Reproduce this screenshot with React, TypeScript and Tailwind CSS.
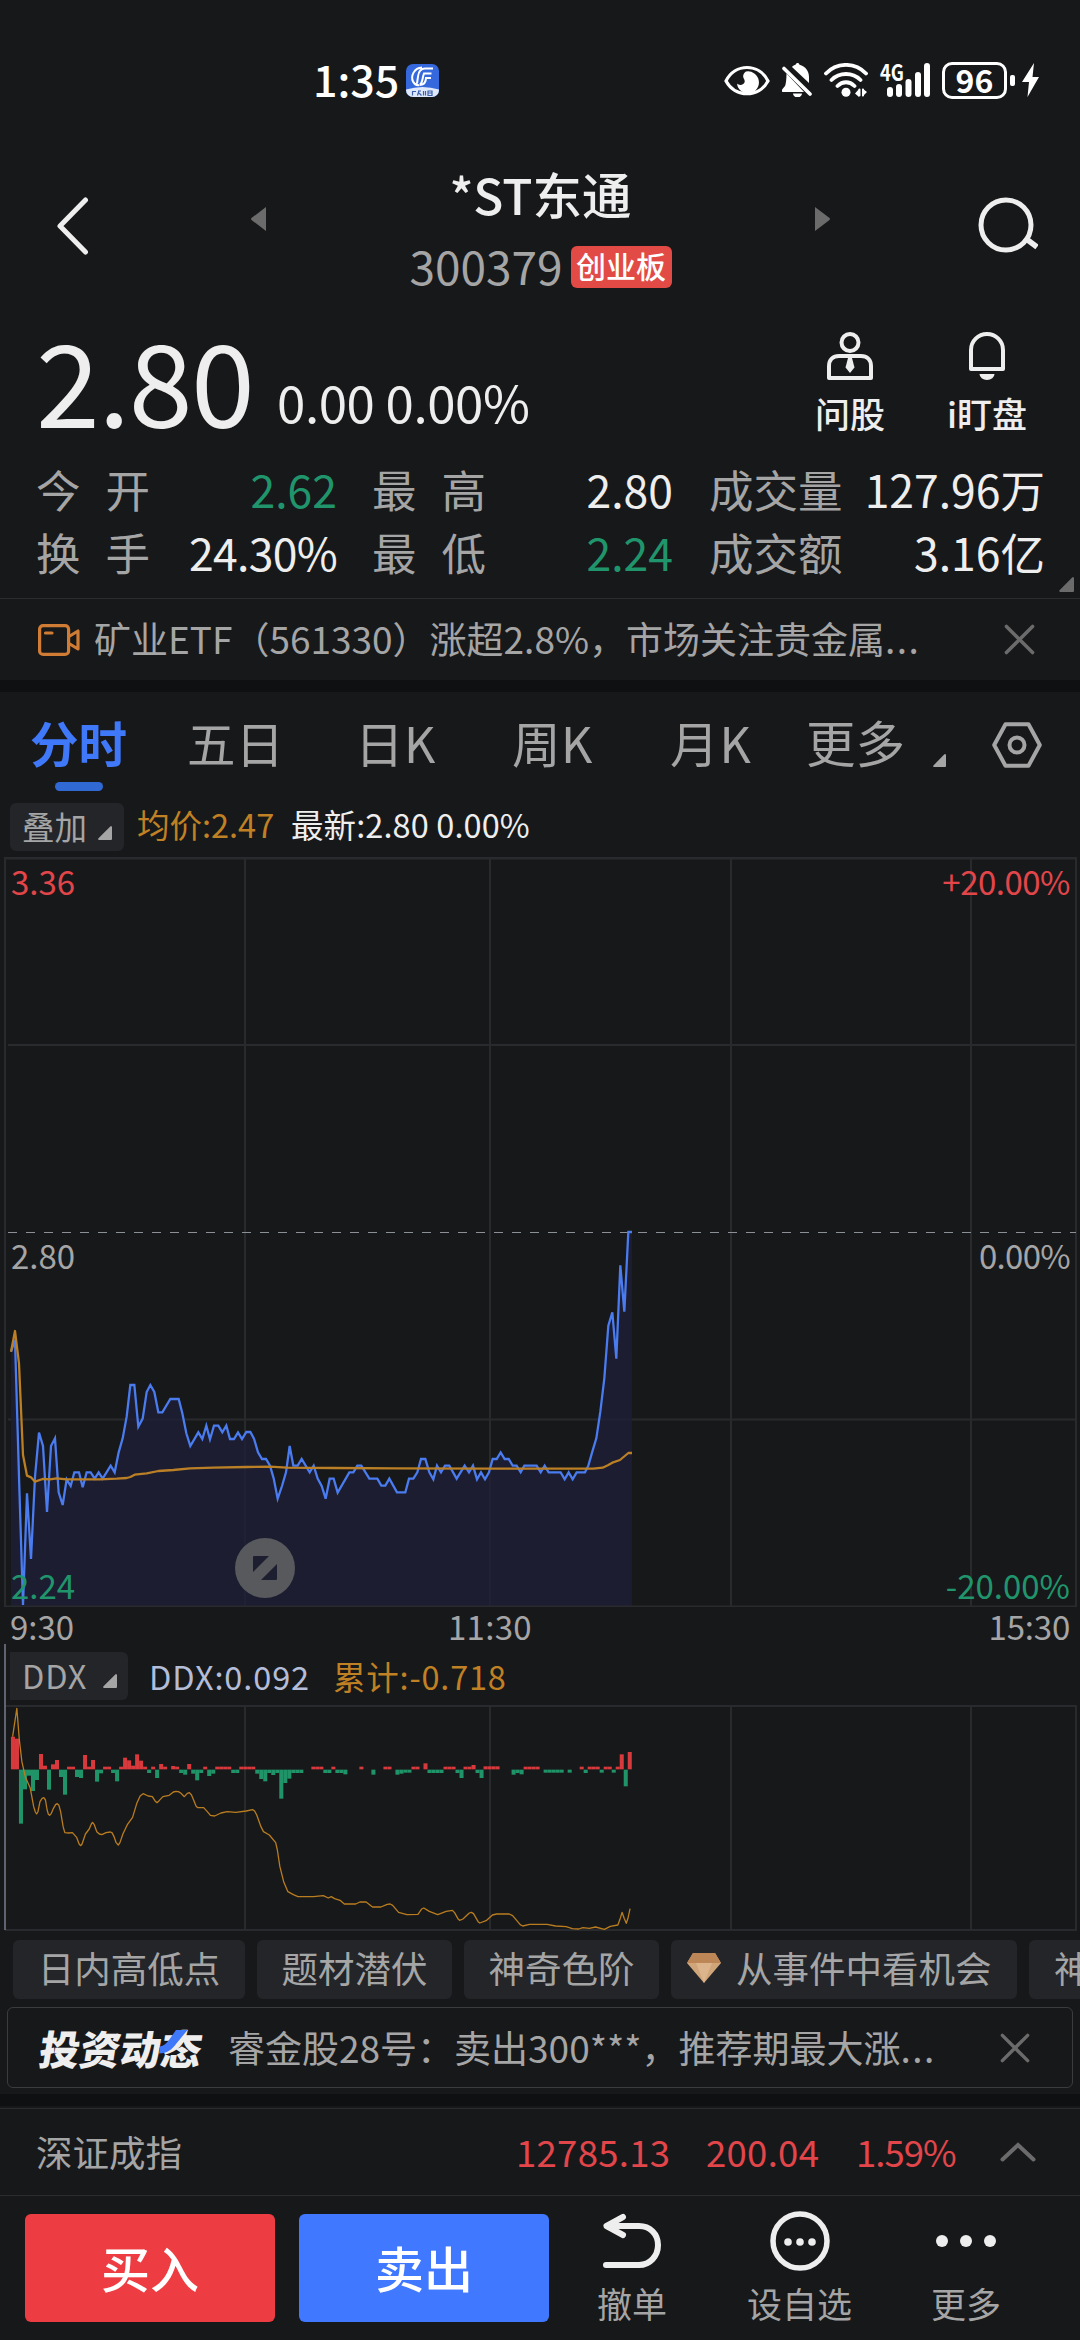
import { ReactNode } from "react";

// x, y pairs in thirds of a pixel, y counted from the 2.80 area (top = 1200)
const PRICE = "33,455 45,420 57,830 69,1215 81,880 93,1077 105,830 117,698 129,738 141,936 153,738 165,715 176,877 188,915 200,838 212,858 223,817 237,817 248,862 260,817 272,817 284,836 296,817 308,836 332,797 344,817 356,757 368,715 380,650 391,555 403,555 415,680 428,656 440,576 451,555 463,576 475,637 487,637 511,597 536,597 547,640 559,700 571,738 595,697 607,717 619,677 630,718 642,677 655,677 667,697 679,677 690,717 702,717 714,697 726,717 739,696 751,696 762,716 774,757 786,777 798,777 810,797 821,835 833,896 846,858 858,817 869,738 880,797 893,797 905,777 929,817 941,797 953,836 965,858 977,896 989,836 1001,836 1013,878 1048,817 1060,817 1072,797 1084,797 1108,836 1132,836 1144,857 1156,857 1168,836 1191,877 1216,877 1227,836 1240,836 1252,817 1263,777 1276,777 1288,817 1300,838 1311,797 1323,817 1335,797 1348,797 1370,836 1394,797 1407,817 1419,797 1431,838 1443,817 1455,838 1467,817 1478,777 1490,777 1502,757 1514,777 1526,777 1538,797 1550,797 1562,817 1573,797 1610,797 1622,817 1634,797 1646,817 1682,817 1694,838 1706,817 1718,838 1730,817 1755,817 1765,797 1777,755 1789,715 1801,635 1813,535 1825,377 1837,337 1849,476 1861,196 1873,335 1885,96 1896,96";

const AVERAGE = "33,455 45,393 57,490 69,765 81,827 93,832 105,845 128,837 150,838 170,835 200,838 300,838 350,836 380,834 391,831 404,824 440,820 475,813 520,810 570,805 640,803 740,801 810,800 860,803 1000,804 1190,805 1460,806 1780,806 1808,803 1825,795 1837,788 1860,780 1885,759 1896,759";

const DDX_LINE = "30,320 40,235 46,330 52,395 60,440 72,475 80,530 84,546 87,552 90,546 95,515 100,505 104,503 108,510 112,540 115,553 118,556 122,550 127,535 132,524 136,521 140,526 144,545 150,590 154,608 163,609 172,608 182,622 188,642 192,647 195,642 203,612 212,597 217,582 220,577 224,584 230,605 236,612 242,614 252,608 262,606 266,608 271,620 276,638 281,645 285,638 292,612 303,583 315,562 325,520 333,498 340,491 352,498 362,500 368,512 373,518 378,512 387,500 402,496 412,486 418,484 424,485 430,490 438,500 445,490 450,488 455,495 460,510 466,529 470,533 484,533 492,544 500,556 510,558 525,549 540,545 560,547 585,543 600,539 605,543 610,555 620,590 626,605 640,615 655,638 659,660 665,710 674,755 684,785 697,794 708,800 745,800 768,797 780,804 787,800 795,806 808,811 818,822 845,822 855,816 870,816 885,831 905,831 920,823 927,822 933,826 947,847 967,854 993,853 1002,837 1007,834 1020,844 1040,854 1060,844 1075,841 1080,848 1088,866 1092,871 1100,867 1115,849 1120,847 1125,851 1136,875 1140,879 1155,872 1170,855 1180,852 1210,852 1218,857 1236,884 1242,888 1258,883 1300,883 1320,888 1345,890 1360,896 1375,897 1385,893 1400,895 1415,891 1436,898 1450,889 1468,885 1473,868 1478,847 1483,865 1488,880 1492,865 1497,836";

const DDX_BARS = [
    98, 92, -162, -59, -18, -64, -31, 46, 11, -60, 15, 28, -22, -75, 8, 8, -22, -25, 43, 8, 28, -36, -11, 8, 8, -10, -35, 8, 35, 27,
    11, 45, 26, 8, -10, 8, -25, 16, 8, 0, 10, 8, -10, -15, 16, -12, -32, -10, 8, -19, -12, 8, 8, 8, 8, -10, -10, 8, 8, 8,
    8, -12, -28, -35, -10, -16, -10, -87, -40, -27, -10, -10, -10, 0, 0, 8, 8, 8, -10, -10, 8, -10, -10, -14, 0, 0, 0, 8, 0, 0,
    -15, 0, 0, 8, 8, 0, -15, -12, -9, -9, 8, 8, 0, 18, -10, -10, -10, -10, 8, 8, 8, -10, -25, 8, 8, 13, -10, -25, 9, 9,
    9, 9, 0, 0, 0, -15, -10, -14, 8, 8, 8, 8, 0, -9, -9, -9, -9, -9, 0, -9, 0, 0, 8, -10, 8, 8, 8, -9, 8, 8,
    -9, 8, 45, -50, 52,
];

const GRID_X = [245, 490, 731, 971];

const STATS = [
    [["今开", "2.62", "text-[#20956c]"], ["最高", "2.80", "text-[#eeeeee]"], ["成交量", "127.96万", "text-[#eeeeee]"]],
    [["换手", "24.30%", "text-[#eeeeee] tracking-[-0.700px]"], ["最低", "2.24", "text-[#20956c]"], ["成交额", "3.16亿", "text-[#eeeeee]"]],
];

const STAT_CELLS = ["w-[301px]", "w-[301px] ml-[35px]", "w-[336px] ml-[36px]"];

function Corner({ className }: { className: string }) {
    return (
        <svg viewBox="0 0 14 14" className={className}>
            <path d="M14 1v12a1 1 0 0 1-1 1H1.200a1 1 0 0 1-.7-1.700L12.300.4A1 1 0 0 1 14 1Z" fill="currentColor" />
        </svg>
    );
}

function Close({ className }: { className: string }) {
    return (
        <svg viewBox="0 0 32 32" className={className} fill="none" stroke="#6b6b6c" strokeWidth="3.600" strokeLinecap="round">
            <path d="M2.500 2.500l27 27M29.500 2.500l-27 27" />
        </svg>
    );
}

function StatusBar() {
    return (
        <div className="flex h-[160px] items-start pt-[62px] text-white">
            <span className="ml-[313px] mt-[-5px] w-[93px] text-[43px] leading-[43px] font-medium">1:35</span>
            <svg viewBox="0 0 33 33" className="mt-[2px] w-[33px] h-[33px]">
                <rect width="33" height="33" rx="7" fill="#3568dc" />
                <path d="M0 25.500q16.500-5 33 0V26a7 7 0 0 1-7 7H7a7 7 0 0 1-7-7Z" fill="#dfe9fb" />
                <path d="M16 3.500C8 4 4.500 12 7 17.500c1.500 3 4 4 6.500 3.500M27 4.500H19c-5 0-6.500 4-7 8l-1 7M25.500 9.500H18c-2 5-1 9-4 11M25 14h-5c0 4-2 6.500-6 7" fill="none" stroke="#fff" strokeWidth="2" />
                <path d="M6 27.500h4M6.500 27.500v4M12 27h3M13 26.500l-1.500 5M13 29l2.500 2.500M17.500 27v4.500M19.500 27v4.500M22 27h4v4.500h-4ZM22 29h4" fill="none" stroke="#3c5fae" strokeWidth="1.200" />
            </svg>
            <svg viewBox="0 0 46 32" className="ml-[285px] mt-[3px] w-[46px] h-[32px]">
                <path d="M2 16C11-2 35-2 44 16 35 33 11 33 2 16Z" fill="none" stroke="#fff" strokeWidth="3.200" />
                <path d="M22 6.500a11 11 0 1 1-9 12c1 1.500 6 2.500 7.500-1 1.200-3-2.500-4.500-1-8 .6-1.500 1.500-2.500 2.500-3Z" fill="#fff" />
            </svg>
            <svg viewBox="0 0 30 34" className="ml-[12px] mt-[1px] w-[30px] h-[34px]" fill="#fff">
                <path d="M10 4c1-1.500 2.500-2 3.500-2.300C14 .6 14.800 0 15.500 0c1 0 1.700.6 2 1.700C23.500 3.500 27 8 27 14v6Z" />
                <path d="M4.500 10.500L22 29H1.500c-2 0-2-1.500-1-3l2.500-3c1-1.500 1.500-8 1.500-12.500ZM11 30.500h9a4.500 4 0 0 1-9 0Z" />
                <path d="M2 5.500L28 31" stroke="#fff" strokeWidth="3.600" strokeLinecap="round" />
            </svg>
            <svg viewBox="0 0 44 34" className="ml-[12px] mt-[1px] w-[44px] h-[34px]" fill="none" stroke="#fff" strokeWidth="3.800" strokeLinecap="round">
                <path d="M2 10.500C13-1 31-1 42 10.500M7.500 17c8-8 21-8 29 0M13.500 23c5-5 12-5 17 0" />
                <circle cx="22" cy="29.300" r="4.500" fill="#fff" stroke="none" />
                <path d="M35 26v8l-4-3.500M38.500 33.500v-8l4.500 3.500" fill="#fff" stroke="none" />
                <path d="M35.500 26.500v6M39 26.500v6" strokeWidth="2" />
            </svg>
            <svg viewBox="0 0 50 34" className="ml-[12px] mt-[1px] w-[50px] h-[34px] overflow-visible" fill="#fff">
                <text x="0" y="17.500" fontSize="23" fontWeight="700" textLength="24" lengthAdjust="spacingAndGlyphs">4G</text>
                <rect x="7" y="24" width="6" height="10" rx="3" />
                <rect x="16" y="21" width="6" height="13" rx="3" />
                <rect x="25.500" y="16" width="6" height="18" rx="3" />
                <rect x="35" y="9" width="6" height="25" rx="3" />
                <rect x="44" y="0" width="6" height="34" rx="3" />
            </svg>
            <div className="ml-[12px] flex h-[37px] w-[65px] items-center justify-center rounded-[10px] border-[3px] border-white text-[32px] leading-none font-bold">
                <span className="mt-[-4px]">96</span>
            </div>
            <div className="ml-[3px] mt-[13px] h-[11px] w-[5px] rounded-[2px] bg-white" />
            <svg viewBox="0 0 17 34" className="ml-[7px] mt-[1px] w-[17px] h-[34px]">
                <path d="M12 0L0 19h7L5.500 34 17 14h-6.500Z" fill="#fff" />
            </svg>
        </div>
    );
}

function Header() {
    return (
        <div className="flex h-[150px] items-start">
            <svg viewBox="0 0 32 58" className="ml-[57px] mt-[37px] w-[32px] h-[58px]" fill="none" stroke="#eeeeee" strokeWidth="5" strokeLinecap="round" strokeLinejoin="round">
                <path d="M28.500 3L3 29l25.500 26" />
            </svg>
            <svg viewBox="0 0 15 24" className="ml-[162px] mt-[47px] w-[15px] h-[24px]">
                <path d="M15 0v24L.8 13.200a1.500 1.500 0 0 1 0-2.400Z" fill="#6b6b6c" />
            </svg>
            <div className="flex w-[549px] flex-col items-center">
                <div className="mt-[5px] text-[49.500px] leading-[58px] font-medium text-[#eeeeee]">*ST东通</div>
                <div className="mt-[20px] flex h-[48px] items-center text-[#a5a5a6]">
                    <span className="text-[46px] leading-none -mt-[5px]">300379</span>
                    <span className="ml-[8px] flex h-[42px] w-[101px] items-center justify-center rounded-[6px] bg-[#e14a45] text-[30px] leading-none font-medium text-white">
                        <span className="mt-[-4px]">创业板</span>
                    </span>
                </div>
            </div>
            <svg viewBox="0 0 15 24" className="mt-[47px] w-[15px] h-[24px]">
                <path d="M0 0v24l14.200-10.800a1.500 1.500 0 0 0 0-2.400Z" fill="#6b6b6c" />
            </svg>
            <svg viewBox="0 0 60 56" className="ml-[148px] mt-[37px] w-[60px] h-[56px]" fill="none" stroke="#eeeeee" strokeWidth="5">
                <circle cx="28" cy="28" r="25" />
                <path d="M47 41l12 9" strokeWidth="5.500" />
            </svg>
        </div>
    );
}

function Quote() {
    return (
        <div className="flex h-[140px] items-start text-[#eeeeee]">
            <span className="ml-[36px] mt-[11px] w-[241px] text-[115px] leading-[115px] tracking-[-1.500px]">2.80</span>
            <span className="mt-[61px] w-[538px] text-[51px] leading-[60px] tracking-[-0.400px]">0.00 0.00%</span>
            <div className="flex w-[70px] flex-col items-center">
                <svg viewBox="0 0 46 48" className="mt-[22px] w-[46px] h-[48px]" fill="none" stroke="#eeeeee" strokeWidth="4" strokeLinejoin="round">
                    <circle cx="23" cy="10.500" r="8.500" />
                    <path d="M2 46V34c0-6 4-10 10-10h22c6 0 10 4 10 10v12Z" />
                    <path d="M21 26h4l2.500 9.500L23 41l-4.500-5.500Z" fill="#eeeeee" stroke="none" />
                </svg>
                <span className="mt-[11px] text-[35px] leading-[44px] font-medium whitespace-nowrap">问股</span>
            </div>
            <div className="ml-[62px] flex w-[80px] flex-col items-center">
                <svg viewBox="0 0 36 48" className="mt-[22px] w-[36px] h-[48px]">
                    <path d="M2 37V18a16 16 0 0 1 32 0v19Z" fill="none" stroke="#eeeeee" strokeWidth="4" strokeLinejoin="round" />
                    <path d="M10.500 42h15a7.500 6 0 0 1-15 0Z" fill="#eeeeee" />
                </svg>
                <span className="mt-[11px] text-[35px] leading-[44px] font-medium whitespace-nowrap">i盯盘</span>
            </div>
        </div>
    );
}

function Stats() {
    return (
        <div className="relative flex h-[148px] flex-col pt-[8px]">
            {STATS.map((row, rowIdx) => (
                <div key={rowIdx} className="flex h-[63px] items-center pl-[36px] text-[44.500px] leading-none text-[#a5a5a6]">
                    {row.map(([label, value, color], idx) => (
                        <div key={label} className={`flex justify-between ${STAT_CELLS[idx]}`}>
                            <span className={label.length === 2 ? "tracking-[25px]" : ""}>{label}</span>
                            <span className={color}>{value}</span>
                        </div>
                    ))}
                </div>
            ))}
            <Corner className="absolute right-[6px] bottom-[6px] w-[15px] h-[15px] text-[#6b6b6c]" />
        </div>
    );
}

function News() {
    return (
        <div className="flex h-[82px] items-center border-t-[1px] border-[#2a2c2e] text-[37px] text-[#a5a5a6]">
            <svg viewBox="0 0 42 32" className="ml-[38px] w-[42px] h-[32px]" fill="none" stroke="#d07c34" strokeWidth="3.200" strokeLinejoin="round">
                <rect x="1.600" y="1.600" width="29" height="28.800" rx="3.500" />
                <path d="M31 12.500l9-5.500v18l-9-5.500M7.500 9h6.500" strokeLinecap="round" />
            </svg>
            <span className="ml-[14px] mt-[-3px] w-[910px] whitespace-nowrap leading-none">矿业ETF（561330）涨超2.8%，市场关注贵金属<span className="tracking-[1.500px]">...</span></span>
            <Close className="w-[31px] h-[31px]" />
        </div>
    );
}

function Tabs() {
    return (
        <div className="flex h-[108px] items-start text-[48.500px] leading-[60px] text-[#a5a5a6]">
            <div className="ml-[30px] mt-[20px] flex w-[157px] flex-col text-[#4078fa]">
                <span className="font-bold">分时</span>
                <span className="ml-[25px] mt-[10px] h-[9px] w-[48px] rounded-full bg-[#3068d4]" />
            </div>
            <span className="mt-[20px] w-[168px]">五日</span>
            <span className="mt-[20px] w-[157px] tracking-[0.500px]">日K</span>
            <span className="mt-[20px] w-[158px] tracking-[0.500px]">周K</span>
            <span className="mt-[20px] w-[136px] tracking-[1px]">月K</span>
            <span className="mt-[20px] w-[127px] text-[49.500px]">更多</span>
            <Corner className="mt-[62px] w-[13px] h-[13px]" />
            <svg viewBox="0 0 50 46" className="ml-[46px] mt-[30px] w-[50px] h-[46px]" fill="none" stroke="currentColor" strokeWidth="4" strokeLinejoin="round">
                <path d="M13.500 2.200h23L47.800 23 36.500 43.800h-23L2.200 23Z" />
                <circle cx="25" cy="23" r="7.500" />
            </svg>
        </div>
    );
}

function Chip({ children, className }: { children: ReactNode; className: string }) {
    return <div className={`flex shrink-0 items-center bg-[#242529] text-[#a5a5a6] ${className}`}>{children}</div>;
}

function PriceChart() {
    return (
        <>
            <div className="flex h-[57px] items-start pt-[3px] text-[32.500px] leading-[40px]">
                <Chip className="ml-[10px] h-[48px] w-[114px] rounded-[6px] pl-[12px]">
                    <span className="mt-[-2px]">叠加</span>
                    <Corner className="ml-[11px] mt-[12px] w-[14px] h-[14px]" />
                </Chip>
                <span className="ml-[13px] mt-[1px] w-[154px] text-[#c08124]">均价:2.47</span>
                <span className="mt-[1px] tracking-[0.100px] text-[#eeeeee]">最新:2.80 0.00%</span>
            </div>
            <div className="relative h-[750px] text-[33px] leading-[40px]">
                <svg viewBox="0 857 1080 750" className="block h-[750px] w-[1080px]">
                    <g stroke="#292a2d" strokeWidth="2">
                        <path d="M5 858H1077" strokeWidth="3" />
                        <path d="M5 857V1607M1076 857V1607" />
                        <path d="M8 1045H1076M8 1419.500H1076" />
                        {GRID_X.map((x) => <path key={x} d={`M${x} 858V1607`} />)}
                    </g>
                    <g transform="translate(0 1200) scale(0.33333)">
                        <polygon points={`33,1220 ${PRICE} 1896,1220`} fill="#1f1f3a" fillOpacity="0.75" />
                    </g>
                    <path d="M8 1232.500H1076" stroke="#8b9097" strokeWidth="1.200" strokeDasharray="9 9" />
                    <g transform="translate(0 1200) scale(0.33333)" fill="none" strokeWidth="6.800">
                        <polyline points={PRICE} stroke="#4a7cf0" />
                        <polyline points={AVERAGE} stroke="#bb8026" strokeLinejoin="round" />
                    </g>
                    <path d="M5 1606.500H1077" stroke="#292a2d" strokeWidth="2" />
                    <circle cx="265" cy="1568" r="30" fill="#58595d" />
                    <path d="M254 1556h15l-16 16v-15q0-1 1-1ZM277 1564v15q0 1-1 1h-15Z" fill="#1d1e2f" />
                </svg>
                <span className="absolute left-[11px] top-[4px] text-[#e2464a]">3.36</span>
                <span className="absolute right-[10px] top-[4px] tracking-[-0.500px] text-[#e2464a]">+20.00%</span>
                <span className="absolute left-[11px] top-[378px] text-[#a5a5a6]">2.80</span>
                <span className="absolute right-[10px] top-[378px] tracking-[-0.700px] text-[#a5a5a6]">0.00%</span>
                <span className="absolute left-[11px] top-[708px] text-[#20956c]">2.24</span>
                <span className="absolute right-[10px] top-[708px] text-[#20956c]">-20.00%</span>
            </div>
            <div className="flex h-[37px] px-[10px] text-[33px] leading-[39px] text-[#a5a5a6]">
                <span className="w-[438px]">9:30</span>
                <span className="tracking-[0.300px]">11:30</span>
                <span className="ml-auto tracking-[-0.200px]">15:30</span>
            </div>
        </>
    );
}

function DdxChart() {
    return (
        <div className="relative h-[286px]">
            <div className="flex h-[62px] items-center text-[32.500px] leading-[40px]">
                <Chip className="ml-[10px] mt-[2px] h-[48px] w-[118px] rounded-r-[6px] pl-[12px]">
                    <span className="mt-[-2px] w-[81px] tracking-[0.800px]">DDX</span>
                    <Corner className="mt-[10px] w-[14px] h-[14px]" />
                </Chip>
                <span className="ml-[21px] mt-[1px] w-[184px] tracking-[0.900px] text-[#b3bdd8]">DDX:0.092</span>
                <span className="mt-[1px] tracking-[0.800px] text-[#c08124]">累计:-0.718</span>
            </div>
            <svg viewBox="0 1706 1080 224" className="block h-[224px] w-[1080px] overflow-visible">
                <g stroke="#292a2d" strokeWidth="2">
                    <path d="M5 1706H1077M5 1930H1077M1076 1706V1930" />
                    {GRID_X.map((x) => <path key={x} d={`M${x} 1706V1930`} />)}
                </g>
                <path d="M5 1644V1930" stroke="#868da0" strokeWidth="1.300" />
                <g transform="translate(0 1630) scale(0.42088 0.33333)">
                    {DDX_BARS.map((value, idx) => (
                        <rect
                            key={idx}
                            x={26 + idx * 9.516}
                            y={value > 0 ? 418 - value : 419}
                            width="9.600"
                            height={Math.abs(value)}
                            fill={value > 0 ? "#d8393c" : "#209468"}
                        />
                    ))}
                    <polyline points={DDX_LINE} fill="none" stroke="#b97d20" strokeWidth="1.300" strokeLinejoin="round" vectorEffect="non-scaling-stroke" />
                </g>
            </svg>
        </div>
    );
}

function Features() {
    return (
        <div className="flex h-[77px] items-start gap-[12px] overflow-hidden pl-[13px] pt-[10px] text-[36.500px] leading-[44px] whitespace-nowrap">
            <Chip className="h-[59px] w-[232px] justify-center rounded-[6px] pb-[3px]">日内高低点</Chip>
            <Chip className="h-[59px] w-[195px] justify-center rounded-[6px] pb-[3px]">题材潜伏</Chip>
            <Chip className="h-[59px] w-[195px] justify-center rounded-[6px] pb-[3px]">神奇色阶</Chip>
            <Chip className="h-[59px] w-[346px] rounded-[6px] pb-[3px] pl-[16px]">
                <svg viewBox="0 0 34 30" className="mr-[15px] w-[34px] h-[30px]">
                    <path d="M6 0h22l6 10-17 20L0 10Z" fill="#d0a57a" />
                    <path d="M6 0h22l6 10H0Z" fill="#bd8657" />
                    <path d="M9 10h16l-8 20Z" fill="#dcb58c" />
                </svg>
                从事件中看机会
            </Chip>
            <Chip className="h-[59px] w-[195px] rounded-[6px] pb-[3px] pl-[25px]">神奇九转</Chip>
        </div>
    );
}

function Promo() {
    return (
        <div className="mx-[7px] flex h-[81px] items-center rounded-[6px] border border-[#3a3c3e] text-[37px] text-[#a5a5a6]">
            <div className="relative ml-[32px] w-[164px]">
                <div className="skew-x-[-9deg] text-[40.500px] leading-[44px] font-black text-[#eeeeee]">投资动态</div>
                <svg viewBox="0 0 30 24" className="absolute left-[118px] top-[4px] w-[30px] h-[24px]">
                    <path d="M29.500 0H18L11 10q-4 5.500-9 6.500L1 23.500c8 0 13-4 17-9.500Z" fill="#4078fa" />
                </svg>
            </div>
            <span className="ml-[24px] mt-[-2px] w-[772px] shrink-0 whitespace-nowrap leading-[46px]">睿金股28号：卖出300***，推荐期最大涨<span className="tracking-[1.500px]">...</span></span>
            <Close className="w-[30px] h-[30px]" />
        </div>
    );
}

function IndexBar() {
    return (
        <div className="flex h-[88px] items-center border-y border-[#2a2c2e] text-[36.500px] leading-[44px] text-[#e2464a]">
            <span className="ml-[36px] w-[480px] text-[#a5a5a6]">深证成指</span>
            <span className="w-[190px] tracking-[0.300px]">12785.13</span>
            <span className="w-[150px] tracking-[0.300px]">200.04</span>
            <span className="w-[144px] tracking-[-1px]">1.59%</span>
            <svg viewBox="0 0 36 20" className="w-[36px] h-[20px]" fill="none" stroke="#6b6b6c" strokeWidth="4" strokeLinecap="round">
                <path d="M2.500 17.500L18 3l15.500 14.500" />
            </svg>
        </div>
    );
}

function BottomBar() {
    return (
        <div className="flex h-[144px] items-start pt-[15px] text-[35px] leading-[44px] text-[#a5a5a6]">
            <button className="ml-[25px] mt-[3px] h-[108px] w-[250px] rounded-[6px] bg-[#ee3d42] pb-[3px] text-[49px] font-medium text-white">买入</button>
            <button className="ml-[24px] mt-[3px] h-[108px] w-[250px] rounded-[6px] bg-[#4078ff] pb-[3px] text-[49px] font-medium text-white">卖出</button>
            <div className="ml-[32px] flex w-[102px] flex-col items-center">
                <svg viewBox="0 0 60 60" className="w-[60px] h-[60px]" fill="none" stroke="#eeeeee" strokeWidth="6" strokeLinecap="round" strokeLinejoin="round">
                    <path d="M21 6L4.500 15 21 24M6 15h31c11 0 19 8 19 19s-8 20-19 20H4" />
                </svg>
                <span className="mt-[10px]">撤单</span>
            </div>
            <div className="ml-[49px] flex w-[135px] flex-col items-center">
                <svg viewBox="0 0 60 60" className="w-[60px] h-[60px]" fill="#eeeeee">
                    <circle cx="30" cy="30" r="27" fill="none" stroke="#eeeeee" strokeWidth="5.500" />
                    <circle cx="18" cy="31" r="3.800" />
                    <circle cx="30" cy="31" r="3.800" />
                    <circle cx="42" cy="31" r="3.800" />
                </svg>
                <span className="mt-[10px]">设自选</span>
            </div>
            <div className="ml-[48px] flex w-[102px] flex-col items-center">
                <svg viewBox="0 0 60 60" className="w-[60px] h-[60px]" fill="#eeeeee">
                    <circle cx="6" cy="30" r="6" />
                    <circle cx="30" cy="30" r="6" />
                    <circle cx="54" cy="30" r="6" />
                </svg>
                <span className="mt-[10px]">更多</span>
            </div>
        </div>
    );
}

function App() {
    return (
        <div className="flex h-[2340px] w-[1080px] flex-col overflow-hidden bg-[#17181a] font-['Noto_Sans_CJK_SC',sans-serif]">
            <StatusBar />
            <Header />
            <Quote />
            <Stats />
            <News />
            <div className="h-[12px] bg-[#0f1012]" />
            <Tabs />
            <PriceChart />
            <DdxChart />
            <Features />
            <Promo />
            <div className="mt-[6px] mb-[2px] h-[12px] bg-[#0f1012]" />
            <IndexBar />
            <BottomBar />
        </div>
    );
}

export default App;
